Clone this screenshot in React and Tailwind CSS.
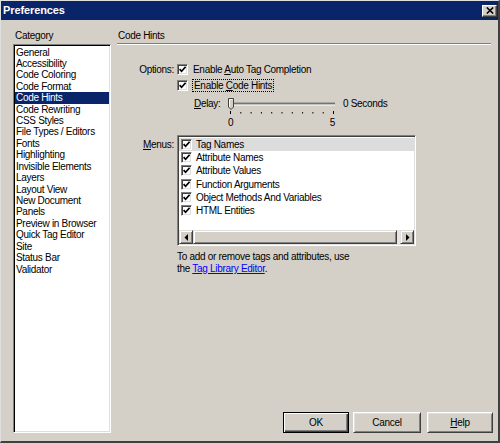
import React from "react";

const categories = [
  "General",
  "Accessibility",
  "Code Coloring",
  "Code Format",
  "Code Hints",
  "Code Rewriting",
  "CSS Styles",
  "File Types / Editors",
  "Fonts",
  "Highlighting",
  "Invisible Elements",
  "Layers",
  "Layout View",
  "New Document",
  "Panels",
  "Preview in Browser",
  "Quick Tag Editor",
  "Site",
  "Status Bar",
  "Validator",
];

const menus = [
  "Tag Names",
  "Attribute Names",
  "Attribute Values",
  "Function Arguments",
  "Object Methods And Variables",
  "HTML Entities",
];

function Check() {
  return (
    <div className="w-[11px] h-[11px] shrink-0 bg-white border border-t-[#808080] border-l-[#808080] border-r-white border-b-white shadow-[inset_1px_1px_#404040,inset_-1px_-1px_#dfdfdf] flex items-center justify-center">
      <svg width="9" height="9" viewBox="0 0 9 9">
        <path d="M1.6 4.2 L3.6 6.3 L7.6 1.8" fill="none" stroke="#000" strokeWidth="1.7" />
      </svg>
    </div>
  );
}

function Btn({ children, def, className = "" }) {
  return (
    <div
      className={
        "h-[21px] flex items-center justify-center " +
        (def
          ? "border border-black shadow-[inset_1px_1px_#fff,inset_-1px_-1px_#404040,inset_-2px_-2px_#808080] "
          : "border border-t-white border-l-white border-r-[#404040] border-b-[#404040] shadow-[inset_1px_1px_#dfdfdf,inset_-1px_-1px_#808080] ") +
        className
      }
    >
      {children}
    </div>
  );
}

function ScrollBtn({ dir }) {
  return (
    <div className="w-[14px] h-[14px] shrink-0 bg-[#d4d0c8] border border-t-[#dfdfdf] border-l-[#dfdfdf] border-r-[#404040] border-b-[#404040] shadow-[inset_1px_1px_#fff,inset_-1px_-1px_#808080] flex items-center justify-center">
      <svg width="5" height="7" viewBox="0 0 5 7">
        {dir === "left" ? <path d="M4 0 L4 7 L0.5 3.5 Z" fill="#000" /> : <path d="M1 0 L1 7 L4.5 3.5 Z" fill="#000" />}
      </svg>
    </div>
  );
}

export default function App() {
  const ticks = Array.from({ length: 11 }, (_, i) => 2 + i * 10.3);
  return (
    <div className="w-[500px] h-[443px] bg-[#d4d0c8] flex flex-col border-l border-t border-l-[#dfdfdf] border-t-[#dfdfdf] border-r-2 border-b-2 border-r-[#404040] border-b-[#404040] font-['Liberation_Sans',Arial,sans-serif] text-[10px] tracking-[-0.3px] text-black overflow-hidden">
      {/* Title bar */}
      <div className="h-[19px] shrink-0 bg-[#0a246a] flex items-center justify-between pl-[2px] pr-[1px]">
        <span className="text-white font-bold text-[11px] tracking-[-0.1px]">Preferences</span>
        <div className="w-[15px] h-[12px] bg-[#d4d0c8] border border-t-white border-l-white border-r-[#404040] border-b-[#404040] shadow-[inset_-1px_-1px_#808080] flex items-center justify-center">
          <svg width="8" height="7" viewBox="0 0 8 7">
            <path d="M0.8 0.5 L7.2 6.5 M7.2 0.5 L0.8 6.5" stroke="#000" strokeWidth="1.6" />
          </svg>
        </div>
      </div>

      {/* Body */}
      <div className="flex flex-1 pl-[12px] pr-[5px] pb-[8px] pt-[10px] min-h-0">
        {/* Category column */}
        <div className="w-[98px] flex flex-col shrink-0">
          <div className="h-[12px] leading-[12px] pl-[2px]">Category</div>
          <div className="mt-[2px] flex-1 bg-white border border-t-[#808080] border-l-[#808080] border-r-white border-b-white shadow-[inset_1px_1px_#000,inset_-1px_-1px_#dfdfdf] p-[1px] pt-[1.5px]">
            {categories.map((c) => (
              <div
                key={c}
                className={
                  "h-[11.43px] leading-[11.43px] pl-[1px] whitespace-nowrap " +
                  (c === "Code Hints" ? "bg-[#0a246a] text-white" : "")
                }
              >
                {c}
              </div>
            ))}
          </div>
        </div>

        {/* Right panel */}
        <div className="flex-1 ml-[6px] flex flex-col">
          <div className="h-[12px] leading-[12px] pl-[1px]">Code Hints</div>
          <div className="mt-[1px] mr-[2px] h-[2px] border-t border-t-[#808080] border-b border-b-white" />

          {/* Options */}
          <div className="mt-[18px] flex items-center h-[13px]">
            <div className="w-[57px] text-right">Options:</div>
            <div className="ml-[3px] flex items-center">
              <Check />
              <span className="ml-[5px]">
                Enable <u>A</u>uto Tag Completion
              </span>
            </div>
          </div>
          <div className="mt-[3px] flex items-center h-[13px]">
            <div className="w-[57px]" />
            <div className="ml-[3px] flex items-center">
              <Check />
              <span className="ml-[4px] border border-dotted border-black px-[1px] leading-[11px]">
                Enable <u>C</u>ode Hints
              </span>
            </div>
          </div>

          {/* Delay slider */}
          <div className="mt-[5px] flex ml-[77px]">
            <div className="w-[34px] h-[13px] leading-[13px]">
              <u>D</u>elay:
            </div>
            <div className="w-[108px] flex flex-col">
              <svg width="108" height="20" viewBox="0 0 108 20">
                <rect x="1" y="5.5" width="106" height="1" fill="#808080" />
                <rect x="1" y="6.5" width="106" height="1" fill="#404040" />
                <rect x="1" y="7.5" width="106" height="1" fill="#fff" />
                <path d="M0.5 1.5 L5.5 1.5 L5.5 10 L3 12.5 L0.5 10 Z" fill="#d4d0c8" stroke="#404040" strokeWidth="1" />
                <path d="M1.5 10 L1.5 2.5 L4.5 2.5" fill="none" stroke="#fff" strokeWidth="1" />
                {ticks.map((x, i) => (
                  <rect
                    key={i}
                    x={x}
                    y={i === 0 || i === ticks.length - 1 ? 14 : 15}
                    width="1"
                    height={i === 0 || i === ticks.length - 1 ? 3 : 1.5}
                    fill="#000"
                  />
                ))}
              </svg>
              <div className="flex justify-between h-[12px] leading-[12px] pr-[1px]">
                <span>0</span>
                <span>5</span>
              </div>
            </div>
            <div className="ml-[7px] h-[13px] leading-[13px]">0 Seconds</div>
          </div>

          {/* Menus */}
          <div className="mt-[6px] flex">
            <div className="w-[57px] text-right pt-[4px] leading-[12px]">
              <u>M</u>enus:
            </div>
            <div className="ml-[3px] w-[239px] h-[111px] bg-white border border-t-[#808080] border-l-[#808080] border-r-white border-b-white shadow-[inset_1px_1px_#404040,inset_-1px_-1px_#dfdfdf] p-[1px] flex flex-col">
              <div className="flex-1 pt-[0.5px]">
                {menus.map((m, i) => (
                  <div
                    key={m}
                    className={"h-[13.3px] flex items-center pl-[2px] " + (i === 0 ? "bg-[#dcdcdc]" : "")}
                  >
                    <Check />
                    <span className="ml-[4px] whitespace-nowrap">{m}</span>
                  </div>
                ))}
              </div>
              <div className="h-[14px] flex bg-[#e8e6e0]">
                <ScrollBtn dir="left" />
                <div className="flex-1 border border-t-[#dfdfdf] border-l-[#dfdfdf] border-r-[#404040] border-b-[#404040] bg-[#d4d0c8] shadow-[inset_1px_1px_#fff,inset_-1px_-1px_#808080]" />
                <div className="w-[3px]" />
                <ScrollBtn dir="right" />
              </div>
            </div>
          </div>

          <div className="mt-[5px] ml-[60px] leading-[12px]">
            <div>To add or remove tags and attributes, use</div>
            <div>
              the <span className="text-[#0000ff] underline">Tag Library Editor</span>.
            </div>
          </div>

          {/* Buttons */}
          <div className="mt-auto flex justify-end">
            <Btn def className="w-[66px]">OK</Btn>
            <Btn className="w-[68px] ml-[4px]">Cancel</Btn>
            <Btn className="w-[66px] ml-[6px]">
              <span>
                <u>H</u>elp
              </span>
            </Btn>
          </div>
        </div>
      </div>
    </div>
  );
}
